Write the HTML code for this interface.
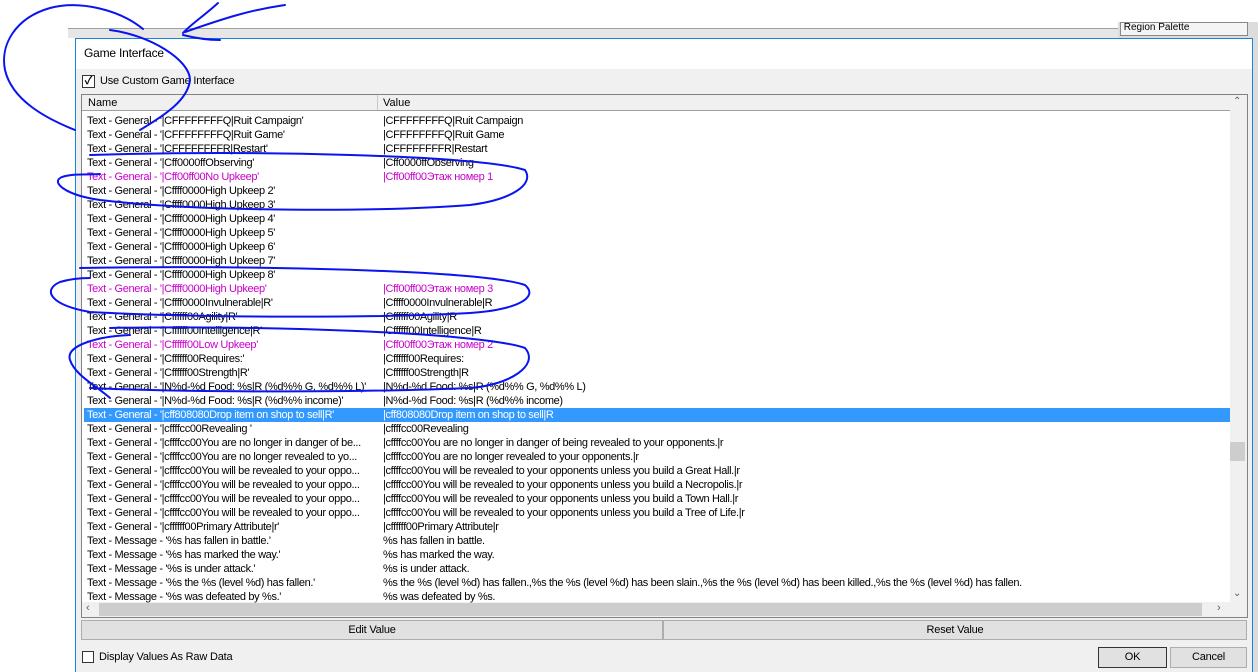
<!DOCTYPE html>
<html><head><meta charset="utf-8"><style>
*{margin:0;padding:0;box-sizing:border-box}
body{width:1258px;height:672px;position:relative;overflow:hidden;background:#fff;font-family:"Liberation Sans","Noto Sans CJK SC",sans-serif;font-size:11px;color:#000}
.abs{position:absolute}
.row{position:absolute;left:84px;width:1146px;height:14px;line-height:14px;white-space:nowrap;letter-spacing:-0.35px}
.row span{position:absolute;top:0}
.n{left:3px}.v{left:299px}
.m{color:#c800c8}
.sel{background:#3399ff;color:#fff}
.btn{position:absolute;background:#e1e1e1;border:1px solid #adadad;text-align:center;line-height:18px;letter-spacing:-0.2px}
</style></head><body>
<div class="abs" style="left:68px;top:28px;width:1050px;height:10px;background:#e6e6e6;border-top:1px solid #a0a0a0"></div>
<div class="abs" style="left:1118px;top:22px;width:140px;height:650px;background:#dcdcdc"></div>
<div class="abs" style="left:1120px;top:22px;width:128px;height:14px;background:#f4f4f4;border:1px solid #888;font-size:10px;line-height:10px;overflow:hidden">&nbsp;Region Palette</div>
<div class="abs" style="left:75px;top:38px;width:1178px;height:634px;background:#f0f0f0;border:1px solid #1883d7;border-bottom:none"></div>
<div class="abs" style="left:76px;top:39px;width:1176px;height:30px;background:#fff"></div>
<div class="abs" style="left:84px;top:46px;font-size:12px;letter-spacing:-0.2px">Game Interface</div>
<div class="abs" style="left:82px;top:75px;width:13px;height:13px;border:1px solid #333;background:#fff;font-size:11px;line-height:11px;text-align:center;font-weight:bold">✓</div>
<div class="abs" style="left:100px;top:75px;letter-spacing:-0.2px">Use Custom Game Interface</div>
<div class="abs" style="left:81px;top:94px;width:1167px;height:524px;border:1px solid #828282;background:#fff"></div>
<div class="abs" style="left:82px;top:95px;width:1148px;height:16px;background:#f0f0f0;border-bottom:1px solid #a0a0a0"></div>
<div class="abs" style="left:377px;top:95px;width:1px;height:15px;background:#c8c8c8"></div>
<div class="abs" style="left:88px;top:97px">Name</div>
<div class="abs" style="left:383px;top:97px">Value</div>
<div class="abs" style="left:1230px;top:95px;width:17px;height:507px;background:#f0f0f0"></div>
<div class="abs" style="left:1233px;top:96px;color:#606060;font-size:10px">&#8963;</div>
<div class="abs" style="left:1233px;top:588px;color:#606060;font-size:10px">&#8964;</div>
<div class="abs" style="left:1230px;top:442px;width:15px;height:19px;background:#cdcdcd"></div>
<div class="abs" style="left:82px;top:602px;width:1165px;height:15px;background:#f0f0f0"></div>
<div class="abs" style="left:99px;top:603px;width:1103px;height:13px;background:#cdcdcd"></div>
<div class="abs" style="left:86px;top:602px;color:#606060">&lsaquo;</div>
<div class="abs" style="left:1217px;top:602px;color:#606060">&rsaquo;</div>
<div id="rows">
<div class="row" style="top:114px"><span class="n">Text - General - '|CFFFFFFFFQ|Ruit Campaign'</span><span class="v">|CFFFFFFFFQ|Ruit Campaign</span></div>
<div class="row" style="top:128px"><span class="n">Text - General - '|CFFFFFFFFQ|Ruit Game'</span><span class="v">|CFFFFFFFFQ|Ruit Game</span></div>
<div class="row" style="top:142px"><span class="n">Text - General - '|CFFFFFFFFR|Restart'</span><span class="v">|CFFFFFFFFR|Restart</span></div>
<div class="row" style="top:156px"><span class="n">Text - General - '|Cff0000ffObserving'</span><span class="v">|Cff0000ffObserving</span></div>
<div class="row m" style="top:170px"><span class="n">Text - General - '|Cff00ff00No Upkeep'</span><span class="v">|Cff00ff00Этаж номер 1</span></div>
<div class="row" style="top:184px"><span class="n">Text - General - '|Cffff0000High Upkeep 2'</span></div>
<div class="row" style="top:198px"><span class="n">Text - General - '|Cffff0000High Upkeep 3'</span></div>
<div class="row" style="top:212px"><span class="n">Text - General - '|Cffff0000High Upkeep 4'</span></div>
<div class="row" style="top:226px"><span class="n">Text - General - '|Cffff0000High Upkeep 5'</span></div>
<div class="row" style="top:240px"><span class="n">Text - General - '|Cffff0000High Upkeep 6'</span></div>
<div class="row" style="top:254px"><span class="n">Text - General - '|Cffff0000High Upkeep 7'</span></div>
<div class="row" style="top:268px"><span class="n">Text - General - '|Cffff0000High Upkeep 8'</span></div>
<div class="row m" style="top:282px"><span class="n">Text - General - '|Cffff0000High Upkeep'</span><span class="v">|Cff00ff00Этаж номер 3</span></div>
<div class="row" style="top:296px"><span class="n">Text - General - '|Cffff0000Invulnerable|R'</span><span class="v">|Cffff0000Invulnerable|R</span></div>
<div class="row" style="top:310px"><span class="n">Text - General - '|Cffffff00Agility|R'</span><span class="v">|Cffffff00Agility|R</span></div>
<div class="row" style="top:324px"><span class="n">Text - General - '|Cffffff00Intelligence|R'</span><span class="v">|Cffffff00Intelligence|R</span></div>
<div class="row m" style="top:338px"><span class="n">Text - General - '|Cffffff00Low Upkeep'</span><span class="v">|Cff00ff00Этаж номер 2</span></div>
<div class="row" style="top:352px"><span class="n">Text - General - '|Cffffff00Requires:'</span><span class="v">|Cffffff00Requires:</span></div>
<div class="row" style="top:366px"><span class="n">Text - General - '|Cffffff00Strength|R'</span><span class="v">|Cffffff00Strength|R</span></div>
<div class="row" style="top:380px"><span class="n">Text - General - '|N%d-%d Food: %s|R (%d%% G, %d%% L)'</span><span class="v">|N%d-%d Food: %s|R (%d%% G, %d%% L)</span></div>
<div class="row" style="top:394px"><span class="n">Text - General - '|N%d-%d Food: %s|R (%d%% income)'</span><span class="v">|N%d-%d Food: %s|R (%d%% income)</span></div>
<div class="row sel" style="top:408px"><span class="n">Text - General - '|cff808080Drop item on shop to sell|R'</span><span class="v">|cff808080Drop item on shop to sell|R</span></div>
<div class="row" style="top:422px"><span class="n">Text - General - '|cffffcc00Revealing '</span><span class="v">|cffffcc00Revealing</span></div>
<div class="row" style="top:436px"><span class="n">Text - General - '|cffffcc00You are no longer in danger of be...</span><span class="v">|cffffcc00You are no longer in danger of being revealed to your opponents.|r</span></div>
<div class="row" style="top:450px"><span class="n">Text - General - '|cffffcc00You are no longer revealed to yo...</span><span class="v">|cffffcc00You are no longer revealed to your opponents.|r</span></div>
<div class="row" style="top:464px"><span class="n">Text - General - '|cffffcc00You will be revealed to your oppo...</span><span class="v">|cffffcc00You will be revealed to your opponents unless you build a Great Hall.|r</span></div>
<div class="row" style="top:478px"><span class="n">Text - General - '|cffffcc00You will be revealed to your oppo...</span><span class="v">|cffffcc00You will be revealed to your opponents unless you build a Necropolis.|r</span></div>
<div class="row" style="top:492px"><span class="n">Text - General - '|cffffcc00You will be revealed to your oppo...</span><span class="v">|cffffcc00You will be revealed to your opponents unless you build a Town Hall.|r</span></div>
<div class="row" style="top:506px"><span class="n">Text - General - '|cffffcc00You will be revealed to your oppo...</span><span class="v">|cffffcc00You will be revealed to your opponents unless you build a Tree of Life.|r</span></div>
<div class="row" style="top:520px"><span class="n">Text - General - '|cffffff00Primary Attribute|r'</span><span class="v">|cffffff00Primary Attribute|r</span></div>
<div class="row" style="top:534px"><span class="n">Text - Message - '%s has fallen in battle.'</span><span class="v">%s has fallen in battle.</span></div>
<div class="row" style="top:548px"><span class="n">Text - Message - '%s has marked the way.'</span><span class="v">%s has marked the way.</span></div>
<div class="row" style="top:562px"><span class="n">Text - Message - '%s is under attack.'</span><span class="v">%s is under attack.</span></div>
<div class="row" style="top:576px"><span class="n">Text - Message - '%s the %s (level %d) has fallen.'</span><span class="v">%s the %s (level %d) has fallen.,%s the %s (level %d) has been slain.,%s the %s (level %d) has been killed.,%s the %s (level %d) has fallen.</span></div>
<div class="row" style="top:590px"><span class="n">Text - Message - '%s was defeated by %s.'</span><span class="v">%s was defeated by %s.</span></div>
</div>
<div class="btn" style="left:81px;top:620px;width:582px;height:20px">Edit Value</div>
<div class="btn" style="left:663px;top:620px;width:584px;height:20px">Reset Value</div>
<div class="abs" style="left:82px;top:651px;width:12px;height:12px;border:1px solid #333;background:#fff"></div>
<div class="abs" style="left:99px;top:651px;letter-spacing:-0.2px">Display Values As Raw Data</div>
<div class="btn" style="left:1098px;top:647px;width:69px;height:21px;border:1px solid #333">OK</div>
<div class="btn" style="left:1170px;top:647px;width:77px;height:21px">Cancel</div>
<svg class="abs" style="left:0;top:0" width="1258" height="672" fill="none" stroke="#0a14f0" stroke-width="2" stroke-linecap="round">
<path d="M143,29 C120,10 80,0 50,8 C15,18 0,45 5,70 C12,100 45,118 75,130"/>
<path d="M110,30 C150,35 190,60 190,80 C188,100 165,115 140,130"/>
<path d="M218,3 C205,15 190,25 183,33 M285,5 C250,10 225,18 185,32 M183,35 C195,38 210,40 220,40"/>
<path d="M90,155 C250,150 480,155 525,170 C535,185 510,200 470,205 C380,212 200,212 100,200 C65,195 50,182 62,177 C75,173 90,175 100,174"/>
<path d="M80,268 C250,265 480,270 525,285 C540,298 515,310 470,313 C380,318 200,318 90,312 C50,305 42,290 60,282 C70,279 80,278 90,278"/>
<path d="M110,328 C250,325 480,332 525,348 C540,365 510,385 470,388 C380,392 200,393 90,388 M130,335 C100,336 65,345 70,360 C75,375 95,385 110,398"/>
</svg>
</body></html>
